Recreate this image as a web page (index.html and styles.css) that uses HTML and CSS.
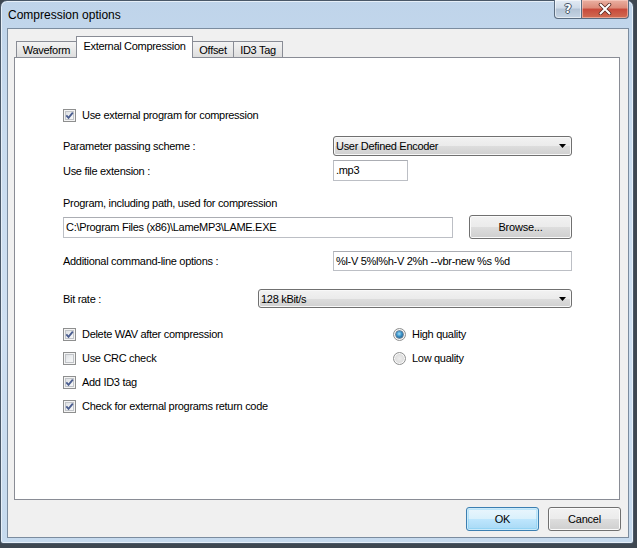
FILE: index.html
```html
<!DOCTYPE html>
<html>
<head>
<meta charset="utf-8">
<link rel="stylesheet" href="styles.css">
</head>
<body>
<div class="window">
  <div class="titlebar">
    <span class="title">Compression options</span>
    <div class="caption-buttons">
      <div class="cap-btn help"><span class="qmark">?</span></div>
      <div class="cap-btn close">
        <svg width="14" height="12" viewBox="0 0 14 12"><path d="M2.5 1.5 L11.5 10.5 M11.5 1.5 L2.5 10.5" stroke="#5a2a22" stroke-width="3.6" stroke-linecap="round"/><path d="M2.5 1.5 L11.5 10.5 M11.5 1.5 L2.5 10.5" stroke="#ffffff" stroke-width="2" stroke-linecap="round"/></svg>
      </div>
    </div>
  </div>
  <div class="client">
    <div class="tabs">
      <div class="tab t-wave">Waveform</div>
      <div class="tab active t-ext">External Compression</div>
      <div class="tab t-off">Offset</div>
      <div class="tab t-id3">ID3 Tag</div>
    </div>
    <div class="panel">
      <div class="content">
        <div class="row r1">
          <span class="cb"><svg viewBox="0 0 11 11" width="11" height="11"><path d="M2.3 5.4 L4.5 7.9 L8.8 2.6" fill="none" stroke="#4a5d8f" stroke-width="1.8"/></svg></span>
          <span class="cb-label">Use external program for compression</span>
        </div>
        <div class="row r2">
          <span class="label w270">Parameter passing scheme :</span>
          <div class="combo w239"><span>User Defined Encoder</span><svg width="7" height="4" viewBox="0 0 7 4"><path d="M0 0 H7 L3.5 4 Z" fill="#000"/></svg></div>
        </div>
        <div class="row r3">
          <span class="label w270">Use file extension :</span>
          <div class="edit w75">.mp3</div>
        </div>
        <div class="row r4">
          <span class="label">Program, including path, used for compression</span>
        </div>
        <div class="row r5">
          <div class="edit w390">C:\Program Files (x86)\LameMP3\LAME.EXE</div>
          <button class="btn browse">Browse...</button>
        </div>
        <div class="row r6">
          <span class="label w270">Additional command-line options :</span>
          <div class="edit w239">%l-V 5%l%h-V 2%h --vbr-new %s %d</div>
        </div>
        <div class="row r7">
          <span class="label w195">Bit rate :</span>
          <div class="combo w314"><span>128 kBit/s</span><svg width="7" height="4" viewBox="0 0 7 4"><path d="M0 0 H7 L3.5 4 Z" fill="#000"/></svg></div>
        </div>
        <div class="options">
          <div class="opt">
            <span class="cb"><svg viewBox="0 0 11 11" width="11" height="11"><path d="M2.3 5.4 L4.5 7.9 L8.8 2.6" fill="none" stroke="#4a5d8f" stroke-width="1.8"/></svg></span>
            <span class="cb-label">Delete WAV after compression</span>
          </div>
          <div class="opt">
            <span class="rb"><span class="dot"></span></span>
            <span class="cb-label">High quality</span>
          </div>
          <div class="opt">
            <span class="cb"></span>
            <span class="cb-label">Use CRC check</span>
          </div>
          <div class="opt">
            <span class="rb"></span>
            <span class="cb-label">Low quality</span>
          </div>
          <div class="opt">
            <span class="cb"><svg viewBox="0 0 11 11" width="11" height="11"><path d="M2.3 5.4 L4.5 7.9 L8.8 2.6" fill="none" stroke="#4a5d8f" stroke-width="1.8"/></svg></span>
            <span class="cb-label">Add ID3 tag</span>
          </div>
          <div class="opt"></div>
          <div class="opt">
            <span class="cb"><svg viewBox="0 0 11 11" width="11" height="11"><path d="M2.3 5.4 L4.5 7.9 L8.8 2.6" fill="none" stroke="#4a5d8f" stroke-width="1.8"/></svg></span>
            <span class="cb-label">Check for external programs return code</span>
          </div>
        </div>
      </div>
    </div>
    <div class="buttons">
      <button class="btn dlg default">OK</button>
      <button class="btn dlg">Cancel</button>
    </div>
  </div>
</div>
</body>
</html>
```

FILE: styles.css
```css
html, body {
  margin: 0;
  padding: 0;
}
body {
  width: 637px;
  height: 548px;
  overflow: hidden;
  background: #3e4751;
  font-family: "Liberation Sans", Arial, sans-serif;
  font-size: 11px;
  color: #000;
}
.window {
  box-sizing: border-box;
  width: 634px;
  height: 544px;
  border: 1px solid #4a5868;
  border-radius: 7px 7px 3px 3px;
  background: linear-gradient(180deg, #bfd4ea 0%, #c9dcef 25%, #cfe0f2 60%, #c6daee 100%);
  box-shadow: inset 0 0 0 1px #e6eff8;
  padding: 0 4px 5px 6px;
  display: flex;
  flex-direction: column;
}
.titlebar {
  height: 27px;
  display: flex;
  justify-content: space-between;
  align-items: flex-start;
  flex: none;
}
.title {
  font-size: 12px;
  line-height: 14px;
  margin-top: 7px;
  padding-left: 1px;
  color: #000;
}
.caption-buttons {
  display: flex;
  margin-top: -1px;
}
.cap-btn {
  box-sizing: border-box;
  height: 19px;
  border: 1px solid #5a6b7f;
  border-top: none;
  display: flex;
  align-items: center;
  justify-content: center;
}
.help {
  width: 28px;
  border-radius: 0 0 0 4px;
  background: linear-gradient(180deg, #e3ebf4 0%, #cfdbe8 45%, #b3c3d5 50%, #c5d4e4 100%);
  box-shadow: inset 0 0 0 1px rgba(255,255,255,0.55);
}
.qmark {
  font-family: "DejaVu Sans", sans-serif;
  font-weight: bold;
  font-size: 12px;
  line-height: 12px;
  color: #fff;
  text-shadow: 0 0 1px #3c4a5c, 1px 0 0 #4a586a, -1px 0 0 #4a586a, 0 1px 0 #4a586a, 0 -1px 0 #4a586a;
}
.close {
  width: 47px;
  border-left: none;
  border-radius: 0 0 4px 0;
  background: linear-gradient(180deg, #eab0a2 0%, #dc8a78 45%, #c8493a 50%, #d16c52 100%);
  box-shadow: inset 0 0 0 1px rgba(255,220,210,0.5);
}
.client {
  flex: 1;
  box-sizing: border-box;
  border: 1px solid #7b8c9f;
  background: #f0f0f0;
  padding: 7px 8px 0 6px;
  display: flex;
  flex-direction: column;
}
.tabs {
  display: flex;
  align-items: flex-end;
  height: 22px;
  margin-bottom: -1px;
  padding-left: 2px;
  position: relative;
  z-index: 1;
  flex: none;
}
.tab {
  box-sizing: border-box;
  height: 16px;
  margin-bottom: 1px;
  border: 1px solid #898c95;
  border-bottom: none;
  background: linear-gradient(180deg, #f3f3f3 0%, #e9e9e9 50%, #dedede 100%);
  text-align: center;
  line-height: 16px;
  white-space: nowrap;
  letter-spacing: -0.3px;
  margin-left: -1px;
}
.t-wave { width: 61px; margin-left: 0; }
.t-ext { width: 117px; }
.t-off { width: 42px; }
.t-id3 { width: 50px; }
.tab.active {
  height: 22px;
  margin-bottom: 0;
  background: #fff;
  line-height: 19px;
  position: relative;
  z-index: 2;
}
.panel {
  box-sizing: border-box;
  height: 443px;
  border: 1px solid #898c95;
  background: #fff;
  flex: none;
}
.content {
  padding: 50px 0 0 48px;
  letter-spacing: -0.3px;
}
.row {
  display: flex;
  align-items: center;
}
.r1 { height: 14px; }
.r2 { margin-top: 14px; height: 20px; }
.r3 { margin-top: 4px; height: 21px; }
.r4 { margin-top: 15px; height: 14px; }
.r5 { margin-top: 5px; height: 24px; gap: 16px; }
.r6 { margin-top: 11px; height: 21px; }
.r7 { margin-top: 18px; height: 19px; }
.label { flex: none; }
.w270 { width: 270px; }
.w195 { width: 195px; }
.cb {
  box-sizing: border-box;
  width: 13px;
  height: 13px;
  flex: none;
  border: 1px solid #8e8f8f;
  background: linear-gradient(135deg, #d7d9dc 0%, #eceef0 50%, #fbfbfb 100%);
  box-shadow: inset 0 0 0 1px #f4f4f4, inset 0 0 0 2px #c1c4c8;
  display: flex;
  align-items: center;
  justify-content: center;
  margin-right: 6px;
}
.cb svg { display: block; }
.rb {
  box-sizing: border-box;
  width: 13px;
  height: 13px;
  flex: none;
  border-radius: 50%;
  border: 1px solid #8e8f8f;
  background: radial-gradient(circle at 50% 50%, #ededed 0%, #dcdcdc 60%, #f7f7f7 100%);
  box-shadow: inset 0 0 0 1px #fafafa;
  display: flex;
  align-items: center;
  justify-content: center;
  margin-right: 6px;
}
.dot {
  width: 7px;
  height: 7px;
  border-radius: 50%;
  background: radial-gradient(circle at 45% 40%, #a4e2fb 0%, #3990c7 45%, #12476f 100%);
  box-shadow: 0 0 0 0.5px #1c3f62;
}
.combo {
  box-sizing: border-box;
  height: 100%;
  border: 1px solid #707070;
  border-radius: 3px;
  background: linear-gradient(180deg, #f2f2f2 0%, #ebebeb 50%, #dddddd 51%, #d0d0d0 100%);
  box-shadow: inset 0 0 0 1px #f8f8f8;
  display: flex;
  align-items: center;
  justify-content: space-between;
  padding: 0 3px 0 2px;
}
.combo svg { margin-right: 2px; }
.w239 { width: 239px; }
.w314 { width: 314px; }
.w75 { width: 75px; }
.w390 { width: 390px; }
.edit {
  box-sizing: border-box;
  height: 21px;
  border: 1px solid #bcbfc5;
  border-top-color: #abadb3;
  background: #fff;
  padding: 0 2px;
  line-height: 19px;
  white-space: nowrap;
  overflow: hidden;
}
.r6 .edit { height: 20px; line-height: 18px; }
.r3 .edit { height: 21px; }
.btn {
  box-sizing: border-box;
  font-family: "Liberation Sans", Arial, sans-serif;
  font-size: 11px;
  letter-spacing: -0.2px;
  color: #000;
  border: 1px solid #707070;
  border-radius: 3px;
  background: linear-gradient(180deg, #f2f2f2 0%, #ebebeb 50%, #dddddd 51%, #cfcfcf 100%);
  box-shadow: inset 0 0 0 1px #fbfbfb;
  padding: 0;
  margin: 0;
}
.browse {
  width: 103px;
  height: 24px;
}
.options {
  margin-top: 14px;
  display: grid;
  grid-template-columns: 330px auto;
  grid-auto-rows: 24px;
}
.opt {
  display: flex;
  align-items: center;
}
.buttons {
  display: flex;
  justify-content: flex-end;
  gap: 9px;
  margin-top: 7px;
  margin-right: -1px;
  flex: none;
}
.dlg {
  width: 73px;
  height: 24px;
}
.btn.default {
  border-color: #3c7fb1;
  background: linear-gradient(180deg, #eaf6fd 0%, #d9f0fc 50%, #bee6fd 51%, #a7d9f5 100%);
  box-shadow: inset 0 0 0 1px #cbeafa, inset 0 0 0 2px rgba(110, 200, 240, 0.35);
}
```
